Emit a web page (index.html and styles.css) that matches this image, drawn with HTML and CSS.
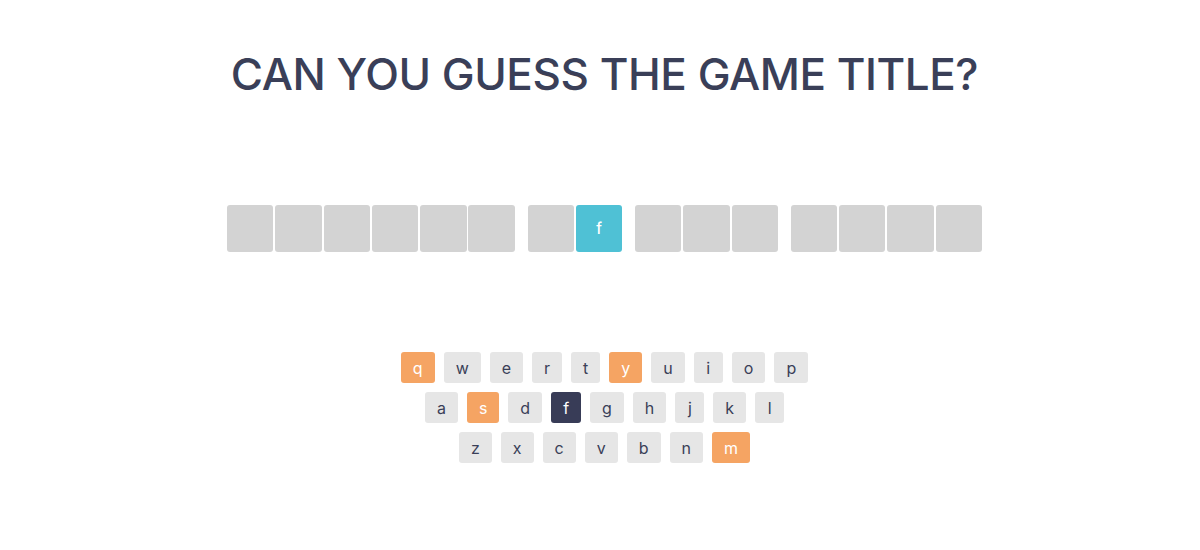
FILE: index.html
```html
<!DOCTYPE html>
<html lang="en">
<head>
<meta charset="utf-8">
<title>Guess the game title</title>
<link rel="stylesheet" href="styles.css">
</head>
<body>
<main class="page">
  <h1 class="title">CAN YOU GUESS THE GAME TITLE?</h1>
  <section class="board">
    <div class="word">
      <span class="tile"></span><span class="tile"></span><span class="tile"></span><span class="tile"></span><span class="tile"></span><span class="tile"></span>
    </div>
    <div class="word">
      <span class="tile"></span><span class="tile tile-found">f</span>
    </div>
    <div class="word">
      <span class="tile"></span><span class="tile"></span><span class="tile"></span>
    </div>
    <div class="word">
      <span class="tile"></span><span class="tile"></span><span class="tile"></span><span class="tile"></span>
    </div>
  </section>
  <section class="keyboard">
    <div class="row">
      <span class="key key-miss">q</span><span class="key">w</span><span class="key">e</span><span class="key">r</span><span class="key">t</span><span class="key key-miss">y</span><span class="key">u</span><span class="key">i</span><span class="key">o</span><span class="key">p</span>
    </div>
    <div class="row">
      <span class="key">a</span><span class="key key-miss">s</span><span class="key">d</span><span class="key key-hit">f</span><span class="key">g</span><span class="key">h</span><span class="key">j</span><span class="key">k</span><span class="key">l</span>
    </div>
    <div class="row">
      <span class="key">z</span><span class="key">x</span><span class="key">c</span><span class="key">v</span><span class="key">b</span><span class="key">n</span><span class="key key-miss">m</span>
    </div>
  </section>
</main>
</body>
</html>
```

FILE: styles.css
```css
html, body {
  margin: 0;
  padding: 0;
  background: #ffffff;
}

body {
  font-family: Inter, "Open Sans", sans-serif;
  color: #3a3f58;
}

.page {
  padding-left: 9px;
  display: flex;
  flex-direction: column;
  align-items: center;
}

.title {
  margin: 48px 0 0;
  font-size: 44px;
  font-weight: 500;
  line-height: 52px;
  letter-spacing: -0.45px;
  color: #3a3f58;
}

.board {
  margin-top: 105px;
  display: flex;
  gap: 12.6px;
}

.word {
  display: flex;
  gap: 1.8px;
}

.tile {
  width: 46.5px;
  height: 47px;
  border-radius: 3px;
  background: #d3d3d3;
  color: #ffffff;
  font-size: 15px;
  font-weight: 500;
  display: flex;
  align-items: center;
  justify-content: center;
}

.tile-found {
  background: #4fc1d5;
}

.keyboard {
  margin-top: 100px;
  display: flex;
  flex-direction: column;
  align-items: center;
  gap: 9px;
}

.row {
  display: flex;
  gap: 9px;
}

.key {
  height: 31px;
  padding: 0 12px;
  min-width: 5px;
  border-radius: 3px;
  background: #e6e6e6;
  color: #3a3f58;
  font-size: 16px;
  display: flex;
  align-items: center;
  justify-content: center;
}

.key-miss {
  background: #f5a463;
  color: #ffffff;
}

.key-hit {
  background: #383c57;
  color: #ffffff;
}
```
